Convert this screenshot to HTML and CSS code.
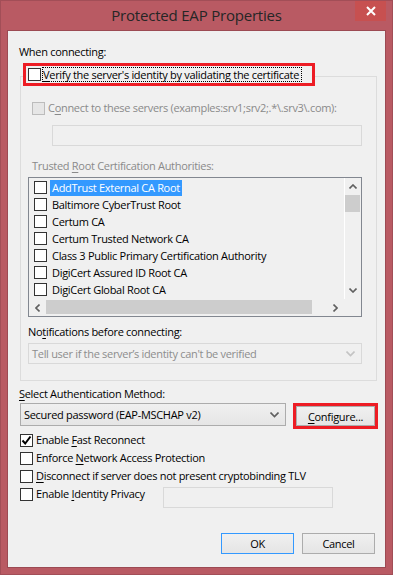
FILE: index.html
```html
<!DOCTYPE html>
<html lang="en">
<head>
    <meta charset="UTF-8">
    <title>Protected EAP Properties</title>
    <link rel="stylesheet" href="styles.css">
</head>
<body>
    <div class="window">
        <div class="titlebar">
            <span></span>
            <div class="title">Protected EAP Properties</div>
            <div class="close">
                <svg width="10" height="10" viewBox="0 0 10 10"><path d="M1 1L9 9M9 1L1 9" stroke="#fff" stroke-width="2"/></svg>
            </div>
        </div>

        <div class="client">
            <div class="label">When connecting:</div>

            <!-- highlighted option, sits on the group box top edge -->
            <div class="mark verify">
                <span class="check"></span>
                <span class="focus"><u>V</u>erify the server's identity by validating the certificate</span>
            </div>

            <div class="group">
                <div class="opt disabled connect">
                    <span class="check off"></span>
                    <span>C<u>o</u>nnect to these servers (examples:srv1;srv2;.*\.srv3\.com):</span>
                </div>
                <div class="textbox servers off"></div>

                <div class="label disabled trusted">Trusted <u>R</u>oot Certification Authorities:</div>
                <div class="list">
                    <div class="items">
                        <div class="item"><span class="check"></span><span class="name selected">AddTrust External CA Root</span></div>
                        <div class="item"><span class="check"></span><span class="name">Baltimore CyberTrust Root</span></div>
                        <div class="item"><span class="check"></span><span class="name">Certum CA</span></div>
                        <div class="item"><span class="check"></span><span class="name">Certum Trusted Network CA</span></div>
                        <div class="item"><span class="check"></span><span class="name">Class 3 Public Primary Certification Authority</span></div>
                        <div class="item"><span class="check"></span><span class="name">DigiCert Assured ID Root CA</span></div>
                        <div class="item"><span class="check"></span><span class="name">DigiCert Global Root CA</span></div>
                    </div>
                    <div class="vscroll">
                        <div class="arrow"><svg width="8" height="5" viewBox="0 0 8 5"><path d="M0.5 4.5L4 1L7.5 4.5" fill="none" stroke="#606060" stroke-width="1.6"/></svg></div>
                        <div class="thumb"></div>
                        <div class="track"></div>
                        <div class="arrow"><svg width="8" height="5" viewBox="0 0 8 5"><path d="M0.5 0.5L4 4L7.5 0.5" fill="none" stroke="#606060" stroke-width="1.6"/></svg></div>
                    </div>
                    <div class="hscroll">
                        <div class="arrow"><svg width="5" height="8" viewBox="0 0 5 8"><path d="M4.5 0.5L1 4L4.5 7.5" fill="none" stroke="#606060" stroke-width="1.6"/></svg></div>
                        <div class="thumb"></div>
                        <div class="track"></div>
                        <div class="arrow"><svg width="5" height="8" viewBox="0 0 5 8"><path d="M0.5 0.5L4 4L0.5 7.5" fill="none" stroke="#606060" stroke-width="1.6"/></svg></div>
                    </div>
                    <div class="corner"></div>
                </div>

                <div class="label notif">No<u>t</u>ifications before connecting:</div>
                <div class="combo off">
                    <span>Tell user if the server’s identity can't be verified</span>
                    <svg width="9" height="6" viewBox="0 0 9 6"><path d="M0.5 0.5L4.5 4.5L8.5 0.5" fill="none" stroke="#c4c4c4" stroke-width="1.6"/></svg>
                </div>
            </div>

            <div class="label select"><u>S</u>elect Authentication Method:</div>
            <div class="method-row">
                <div class="combo method">
                    <span>Secured password (EAP-MSCHAP v2)</span>
                    <svg width="9" height="6" viewBox="0 0 9 6"><path d="M0.5 0.5L4.5 4.5L8.5 0.5" fill="none" stroke="#606060" stroke-width="1.6"/></svg>
                </div>
                <div class="mark configure">
                    <div class="button"><u>C</u>onfigure...</div>
                </div>
            </div>

            <div class="options">
                <div class="opt">
                    <span class="check on"><svg width="11" height="11" viewBox="0 0 11 11"><path d="M1.5 5.5L4.2 8.5L9.5 1.5" fill="none" stroke="#000" stroke-width="2"/></svg></span>
                    <span>Enable <u>F</u>ast Reconnect</span>
                </div>
                <div class="opt">
                    <span class="check"></span>
                    <span>Enforce <u>N</u>etwork Access Protection</span>
                </div>
                <div class="opt">
                    <span class="check"></span>
                    <span><u>D</u>isconnect if server does not present cryptobinding TLV</span>
                </div>
                <div class="opt">
                    <span class="check"></span>
                    <span>Enable <u>I</u>dentity Privacy</span>
                    <div class="textbox privacy off"></div>
                </div>
            </div>

            <div class="actions">
                <div class="button default">OK</div>
                <div class="button">Cancel</div>
            </div>
        </div>
    </div>
</body>
</html>
```

FILE: styles.css
```css
body {
    margin: 0;
    font-family: "Segoe UI", "Open Sans", sans-serif;
    font-size: 11px;
    letter-spacing: -0.3px;
    color: #000;
}
u {
    text-decoration-thickness: 1px;
    text-underline-offset: 2px;
}
.window {
    width: 393px;
    height: 575px;
    box-sizing: border-box;
    background-color: #b95a63;
    border: 1px solid #a24e57;
    padding: 0 6px;
}

/* 标题栏 */
.titlebar {
    height: 29px;
    display: grid;
    grid-template-columns: 1fr auto 1fr;
}
.title {
    font-size: 15px;
    letter-spacing: -0.2px;
    line-height: 29px;
    color: #262626;
}
.close {
    justify-self: end;
    width: 31px;
    height: 20px;
    background-color: #c75050;
    display: flex;
    align-items: center;
    justify-content: center;
}

/* 对话框主体 */
.client {
    width: 379px;
    height: 538px;
    box-sizing: border-box;
    border: 1px solid #9c4a53;
    background-color: #f0f0f0;
    padding: 13px 0 0 11px;
}
.label {
    line-height: 16px;
    white-space: nowrap;
}
.disabled {
    color: #8a8a8a;
}

/* 复选框 */
.check {
    width: 13px;
    height: 13px;
    box-sizing: border-box;
    border: 1px solid #333;
    background-color: #fff;
    flex: none;
    display: flex;
    align-items: center;
    justify-content: center;
}
.check.off {
    border-color: #bcbcbc;
    background-color: #e6e6e6;
}
.opt {
    display: flex;
    align-items: center;
    gap: 3px;
    line-height: 16px;
    white-space: nowrap;
}

/* 红色标注框 */
.mark {
    border: 3px solid #ed1c24;
    background-color: #f0f0f0;
    box-sizing: border-box;
}
.verify {
    position: relative;
    z-index: 1;
    margin: 3px 0 0 4px;
    width: 292px;
    height: 23px;
    display: flex;
    align-items: center;
    padding-left: 2px;
    white-space: nowrap;
}
.focus {
    margin-left: 1px;
    border: 1px dotted #000;
    line-height: 13px;
    padding-right: 2px;
}

/* 分组框 */
.group {
    margin: -10px 0 0 1px;
    width: 357px;
    box-sizing: border-box;
    border: 1px solid #dcdcdc;
    padding: 23px 0 16px 7px;
}
.connect {
    margin-left: 4px;
}
.textbox {
    box-sizing: border-box;
    height: 21px;
    border: 1px solid #abadb3;
    background-color: #fff;
}
.textbox.off {
    border-color: #d9d9d9;
    background-color: #f0f0f0;
}
.servers {
    margin: 9px 0 0 24px;
    width: 310px;
}
.trusted {
    margin: 12px 0 0 4px;
}

/* 证书列表 */
.list {
    margin-top: 3px;
    width: 334px;
    height: 140px;
    box-sizing: border-box;
    border: 1px solid #828790;
    display: grid;
    grid-template-columns: 1fr 17px;
    grid-template-rows: 1fr 17px;
}
.items {
    padding: 1px 0 0 5px;
    overflow: hidden;
}
.item {
    height: 17px;
    display: flex;
    align-items: center;
    gap: 3px;
    white-space: nowrap;
}
.name {
    padding: 0 2px;
    line-height: 16px;
}
.name.selected {
    background-color: #3399ff;
    color: #fff;
}
.vscroll {
    display: flex;
    flex-direction: column;
    border-left: 1px solid #fff;
}
.vscroll .arrow {
    height: 17px;
    display: flex;
    align-items: center;
    justify-content: center;
}
.vscroll .thumb {
    height: 17px;
    margin-right: 1px;
    background-color: #cdcdcd;
}
.track {
    flex: 1;
}
.hscroll {
    display: flex;
}
.hscroll .arrow {
    width: 17px;
    display: flex;
    align-items: center;
    justify-content: center;
}
.hscroll .thumb {
    width: 266px;
    margin: 1px 0 2px;
    background-color: #cdcdcd;
}

.notif {
    margin-top: 7px;
}

/* 下拉框 */
.combo {
    box-sizing: border-box;
    border: 1px solid #acacac;
    background: linear-gradient(#f0f0f0, #e5e5e5);
    display: flex;
    align-items: center;
    justify-content: space-between;
    padding: 0 6px 0 3px;
    white-space: nowrap;
}
.combo.off {
    margin-top: 3px;
    width: 334px;
    height: 21px;
    border-color: #d9d9d9;
    background: #f0f0f0;
    color: #8d8d8d;
}
.select {
    margin-top: 5px;
}
.method-row {
    margin-top: 1px;
    display: flex;
    align-items: flex-start;
    gap: 7px;
}
.method {
    margin-left: 1px;
    width: 266px;
    height: 23px;
}
.configure {
    width: 85px;
    height: 26px;
    display: flex;
}

/* 按钮 */
.button {
    flex: 1;
    box-sizing: border-box;
    border: 1px solid #acacac;
    background: linear-gradient(#f0f0f0, #e5e5e5);
    display: flex;
    align-items: center;
    justify-content: center;
}

/* 底部选项 */
.options {
    margin: 2px 0 0 1px;
}
.options .opt {
    height: 18px;
}
.privacy {
    align-self: flex-start;
    margin: 2px 52px 0 auto;
    width: 170px;
    flex: none;
}
.actions {
    margin-top: 30px;
    padding-right: 10px;
    display: flex;
    justify-content: flex-end;
    gap: 8px;
}
.actions .button {
    flex: none;
    width: 73px;
    height: 21px;
}
.button.default {
    border-color: #3399ff;
}
```
